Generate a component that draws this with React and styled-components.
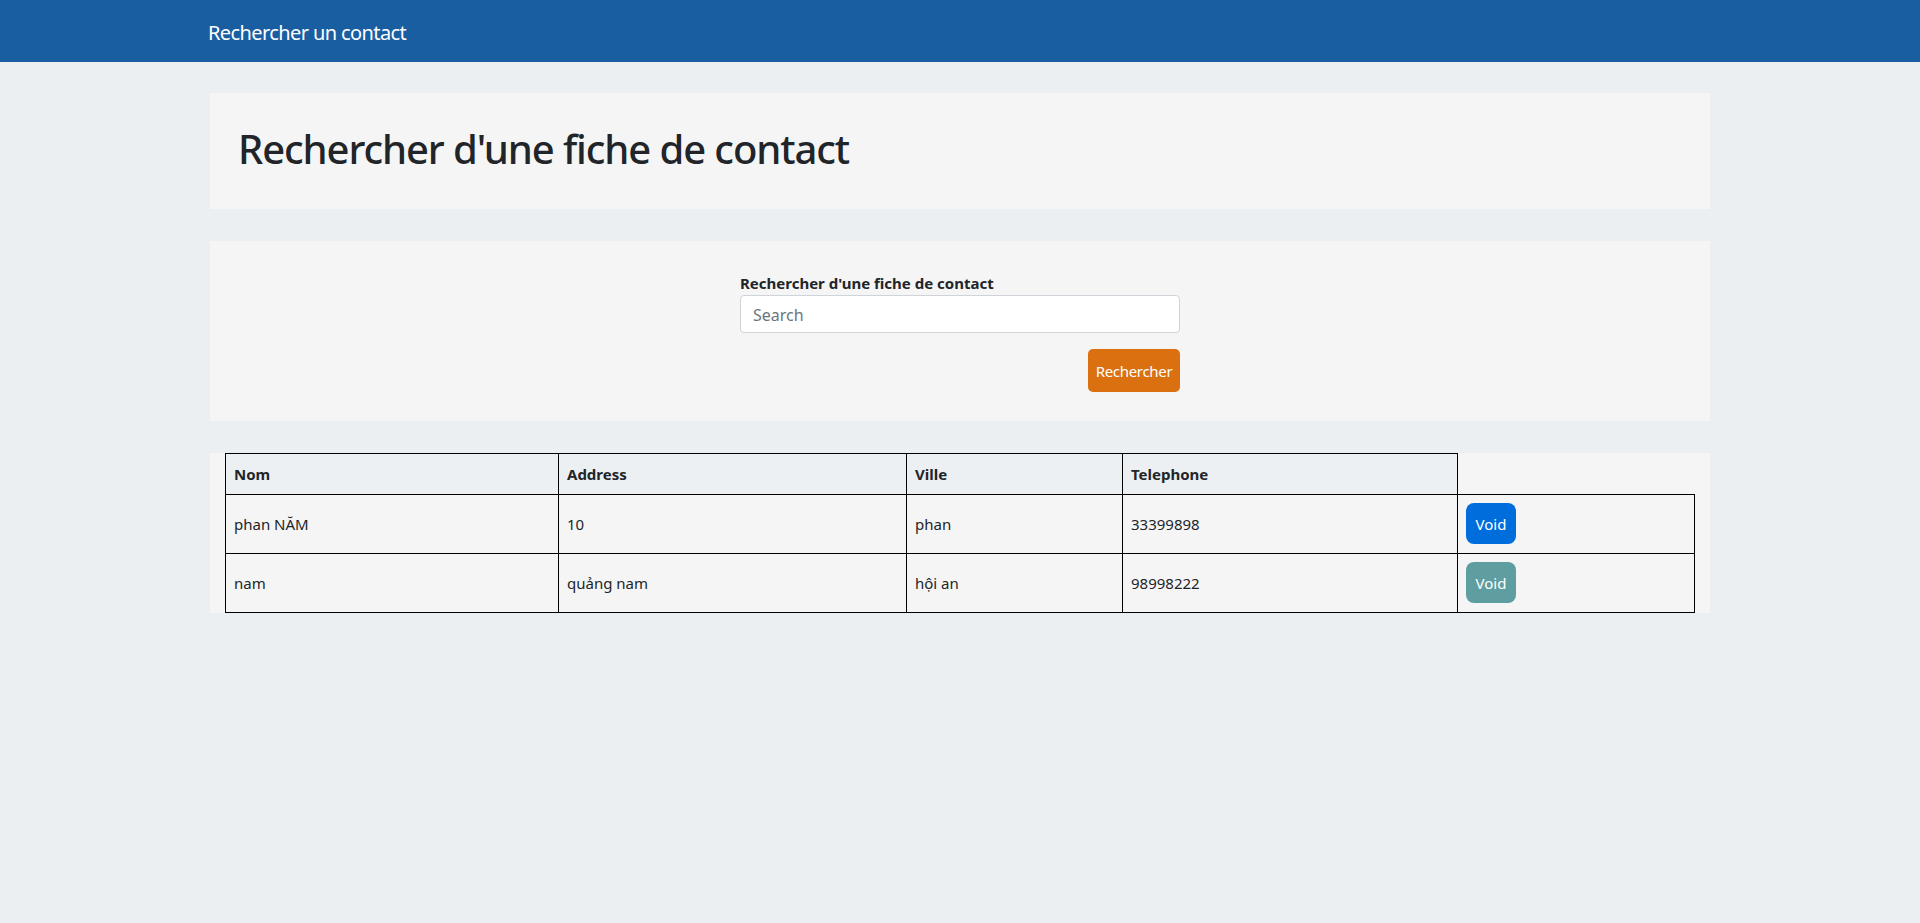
import React from "react";
import styled, { createGlobalStyle } from "styled-components";

const GlobalStyle = createGlobalStyle`
  * { box-sizing: border-box; }
  html, body { margin: 0; padding: 0; }
  body {
    background: #eceff2;
    font-family: "Segoe UI", "Noto Sans", "Open Sans", sans-serif;
    font-size: 16px;
    line-height: 1.5;
    color: #212529;
  }
`;

const Navbar = styled.nav`
  height: 62px;
  background: #1a5ea2;
  display: flex;
  align-items: center;
  padding: 3px 0 0 208px;
`;

const Brand = styled.span`
  color: #ffffff;
  font-size: 20px;
  line-height: 30px;
  letter-spacing: -0.6px;
`;

const Main = styled.main`
  width: 1500px;
  margin: 31px 0 0 210px;
  display: flex;
  flex-direction: column;
  gap: 32px;
`;

const Card = styled.section`
  background: #f5f5f5;
  padding: ${(p) => p.$pad || "0"};
`;

const Title = styled.h1`
  margin: 0;
  font-size: 40px;
  line-height: 48px;
  font-weight: 500;
  letter-spacing: -1.1px;
  color: #212529;
`;

const Form = styled.form`
  width: 440px;
  margin: 0 auto;
  display: flex;
  flex-direction: column;
`;

const Label = styled.label`
  font-size: 15px;
  font-weight: 700;
  line-height: 24px;
  color: #212529;
`;

const Input = styled.input`
  height: 38px;
  width: 100%;
  padding: 7px 12px 5px;
  border: 1px solid #ced4da;
  border-radius: 4px;
  background: #ffffff;
  font-family: inherit;
  font-size: 16px;
  color: #212529;
  &::placeholder { color: #6c757d; }
`;

const Actions = styled.div`
  display: flex;
  justify-content: flex-end;
  margin-top: 16px;
`;

const SearchButton = styled.button`
  height: 43px;
  width: 92px;
  border: none;
  border-radius: 5px;
  background: #da7010;
  color: #ffffff;
  font-family: inherit;
  font-size: 15px;
  letter-spacing: -0.3px;
  padding: 0;
`;

const Table = styled.table`
  width: 100%;
  border-collapse: collapse;
  font-size: 15px;
`;

const Th = styled.th`
  background: #ecf0f3;
  border: 1px solid #000;
  text-align: left;
  font-weight: 700;
  padding: 8px;
  line-height: 24px;
`;

const Td = styled.td`
  border: 1px solid #000;
  padding: 8px 8px 9px;
  vertical-align: middle;
  line-height: 24px;
`;

const VoidButton = styled.button`
  height: 41px;
  width: 50px;
  border: none;
  border-radius: 8px;
  background: ${(p) => p.$color};
  color: #ffffff;
  font-family: inherit;
  font-size: 15px;
  padding: 0;
  display: block;
`;

const rows = [
  { nom: "phan NĂM", address: "10", ville: "phan", tel: "33399898", color: "#006ddc" },
  { nom: "nam", address: "quảng nam", ville: "hội an", tel: "98998222", color: "#5f9ea0" },
];

export default function App() {
  return (
    <>
      <GlobalStyle />
      <Navbar>
        <Brand>Rechercher un contact</Brand>
      </Navbar>
      <Main>
        <Card $pad="32px 28px 36px">
          <Title>Rechercher d'une fiche de contact</Title>
        </Card>
        <Card $pad="30px 0 29px">
          <Form onSubmit={(e) => e.preventDefault()}>
            <Label htmlFor="search">Rechercher d'une fiche de contact</Label>
            <Input id="search" placeholder="Search" />
            <Actions>
              <SearchButton type="submit">Rechercher</SearchButton>
            </Actions>
          </Form>
        </Card>
        <Card $pad="0 15px">
          <Table>
            <colgroup>
              <col style={{ width: 333 }} />
              <col style={{ width: 348 }} />
              <col style={{ width: 216 }} />
              <col style={{ width: 335 }} />
              <col />
            </colgroup>
            <thead>
              <tr>
                <Th>Nom</Th>
                <Th>Address</Th>
                <Th>Ville</Th>
                <Th>Telephone</Th>
              </tr>
            </thead>
            <tbody>
              {rows.map((r) => (
                <tr key={r.nom}>
                  <Td>{r.nom}</Td>
                  <Td>{r.address}</Td>
                  <Td>{r.ville}</Td>
                  <Td>{r.tel}</Td>
                  <Td>
                    <VoidButton $color={r.color}>Void</VoidButton>
                  </Td>
                </tr>
              ))}
            </tbody>
          </Table>
        </Card>
      </Main>
    </>
  );
}
